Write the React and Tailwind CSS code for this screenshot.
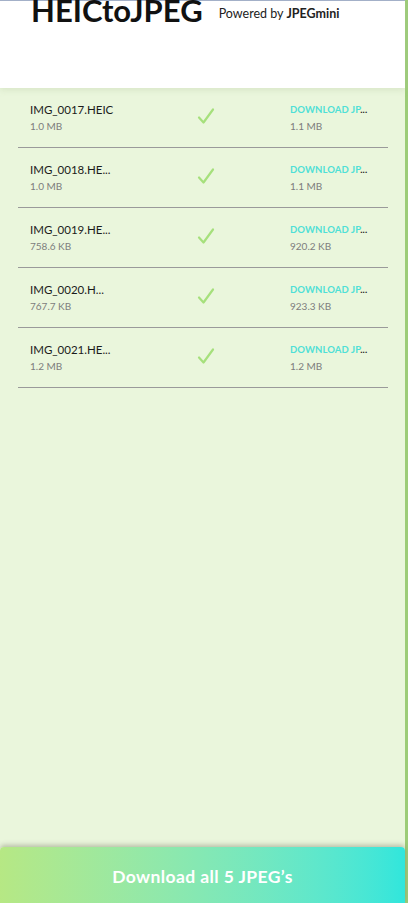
import React from 'react';

const files = [
  { name: 'IMG_0017.HEIC', size: '1.0 MB', out: '1.1 MB' },
  { name: 'IMG_0018.HE...', size: '1.0 MB', out: '1.1 MB' },
  { name: 'IMG_0019.HE...', size: '758.6 KB', out: '920.2 KB' },
  { name: 'IMG_0020.H...', size: '767.7 KB', out: '923.3 KB' },
  { name: 'IMG_0021.HE...', size: '1.2 MB', out: '1.2 MB' },
];

const Check = () => (
  <svg width="18" height="18" viewBox="0 0 18 18" fill="none">
    <path d="M2 10.5l4.5 5L16 2.5" stroke="#a6e07c" strokeWidth="2.2" strokeLinecap="round" strokeLinejoin="round" />
  </svg>
);

const FileRow = ({ file }) => (
  <div className="flex h-[60px] items-start border-b border-[#9a9a9a] pt-[15px]">
    <div className="w-[96px] pl-3">
      <p className="whitespace-nowrap text-[11.5px] leading-[14px] text-[#1b1b1b]">{file.name}</p>
      <p className="mt-[3px] text-[10px] leading-[12px] text-[#7d7d7d]">{file.size}</p>
    </div>
    <div className="ml-[83px] mt-[4px]">
      <Check />
    </div>
    <div className="ml-[75px] w-[84px]">
      <p className="whitespace-nowrap text-[9.5px] font-bold leading-[14px] tracking-[0.1px] text-[#1b1b1b]">
        <span className="text-[#4fe0d6]">DOWNLOAD JP</span>...
      </p>
      <p className="mt-[3px] text-[10px] leading-[12px] text-[#7d7d7d]">{file.out}</p>
    </div>
  </div>
);

export default function App() {
  return (
    <div className="flex h-[903px] w-[408px] overflow-hidden bg-[#eaf6dc] font-['Lato',sans-serif]">
      <div className="flex w-[405px] flex-col">
        <header className="relative z-10 h-[88px] border-t border-[#a3b0c8] bg-white shadow-[0_2px_6px_rgba(180,200,160,0.35)]">
          <div className="mt-[-6px] flex items-end pl-[31px]">
            <h1 className="text-[31px] font-bold leading-[30px] tracking-[0px] text-[#111]">HEICtoJPEG</h1>
            <p className="mb-[4px] ml-[16px] text-[12.5px] leading-[14px] text-[#222]">
              Powered by <span className="font-bold">JPEGmini</span>
            </p>
          </div>
        </header>
        <main className="flex-1 px-[18px] pr-[17px]">
          {files.map((f) => (
            <FileRow key={f.name} file={f} />
          ))}
        </main>
        <button className="relative h-[56px] w-full rounded-t-[4px] bg-gradient-to-r from-[#b6e884] to-[#30e6dc] pt-[5px] text-[17.5px] font-bold tracking-[0.4px] text-white shadow-[0_-2px_5px_rgba(120,120,100,0.45)]">
          Download all 5 JPEG’s
        </button>
      </div>
      <div className="w-[3px] bg-[#9ccc78]" />
    </div>
  );
}
